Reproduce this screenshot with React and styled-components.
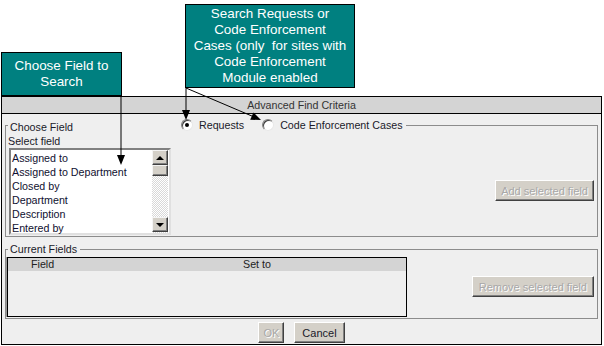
import React from "react";
import styled, { createGlobalStyle } from "styled-components";

const GlobalStyle = createGlobalStyle`
    html, body {
        margin: 0;
        padding: 0;
        background: #fff;
    }
    body {
        font-family: "Liberation Sans", Arial, sans-serif;
        font-size: 10.7px;
        color: #1a1a2a;
    }
`

const Page = styled.div`
    position: relative;
    width: 604px;
    height: 346px;
    overflow: hidden;
    background: #fff;
`

const Annotations = styled.div`
    display: flex;
    align-items: flex-start;
    height: 96px;
`

const Callout = styled.div`
    box-sizing: border-box;
    display: flex;
    align-items: center;
    justify-content: center;
    text-align: center;
    background: #008080;
    color: #fff;
    border: 1px solid #000;
    font-size: 13.4px;
    line-height: 16px;
    margin-top: ${p => p.top}px;
    margin-left: ${p => p.left}px;
    width: ${p => p.w}px;
    height: ${p => p.h}px;
`

const Arrows = styled.svg`
    position: absolute;
    left: 0;
    top: 0;
    pointer-events: none;
    z-index: 2;
`

const Dialog = styled.div`
    box-sizing: border-box;
    margin-left: 1px;
    width: 601px;
    border: 1px solid #000;
    background: #efefef;
`

const TitleBar = styled.div`
    height: 16px;
    line-height: 16px;
    background: #d4d4d4;
    border-bottom: 1px solid #000;
    text-align: center;
    color: #333;
`

const Body = styled.div`
    padding: 5px 3px 1px 3px;
`

const Fieldset = styled.fieldset`
    margin: ${p => p.mt || 0}px 0 0 0;
    padding: 0 2px ${p => p.pb || 0}px ${p => p.pl || 0}px;
    border: 1px solid #8c8c8c;
    min-width: 0;
`

const Legend = styled.legend`
    padding: 0 3px 0 ${p => p.pl || 2}px;
    line-height: 12px;
    height: 12px;
    margin-left: ${p => p.ml || 0}px;
`

const LegendRow = styled.span`
    display: inline-flex;
    align-items: center;
    height: 12px;
`

const LegendLabel = styled.span`
    width: 171px;
    margin-top: 3px;
`

const Radio = styled.span`
    box-sizing: border-box;
    display: inline-flex;
    align-items: center;
    justify-content: center;
    width: 12px;
    height: 12px;
    border-radius: 50%;
    background: #fff;
    border: 1px solid;
    border-color: #808080 #e8e8e8 #e8e8e8 #808080;
    box-shadow: inset 1px 1px 0 #404040;
    margin-right: 6px;
    margin-left: ${p => p.ml || 0}px;
    &::after {
        content: "";
        width: 4px;
        height: 4px;
        border-radius: 50%;
        background: ${p => (p.checked ? "#000" : "transparent")};
    }
`

const ChooseRow = styled.div`
    display: flex;
`

const ChooseColumn = styled.div`
    display: flex;
    flex-direction: column;
`

const Label = styled.div`
    line-height: 13px;
    margin: 4px 0 0 0;
`

const ListBox = styled.div`
    box-sizing: border-box;
    display: flex;
    width: 162px;
    height: 87px;
    background: #fff;
    border: 2px solid;
    border-color: #808080 #e0e0e0 #e0e0e0 #808080;
    margin-left: 1px;
`

const Items = styled.ul`
    flex: 1;
    list-style: none;
    margin: 0;
    padding: 1px 0 0 1px;
`

const Item = styled.li`
    line-height: 14px;
    color: #101030;
`

const ScrollBar = styled.div`
    display: flex;
    flex-direction: column;
    width: 16px;
    margin-right: 1px;
    background: repeating-conic-gradient(#d8d8d8 0 25%, #fff 0 50%) 0 0 / 2px 2px;
`

const ScrollButton = styled.div`
    box-sizing: border-box;
    display: flex;
    align-items: center;
    justify-content: center;
    height: ${p => p.h || 15}px;
    background: #d4d0c8;
    border: 1px solid;
    border-color: #f4f4f4 #404040 #404040 #f4f4f4;
    box-shadow: inset -1px -1px 0 #808080;
    margin-bottom: ${p => p.mb || 0}px;
`

const ArrowGlyph = styled.span`
    width: 0;
    height: 0;
    border-left: 4px solid transparent;
    border-right: 4px solid transparent;
    ${p => (p.down ? "border-top: 4px solid #000;" : "border-bottom: 4px solid #000;")}
`

const Track = styled.div`
    flex: 1;
`

const Button = styled.button`
    box-sizing: border-box;
    height: 21px;
    padding: 0 ${p => p.px || 6}px;
    font-family: "Liberation Sans", Arial, sans-serif;
    font-size: 11px;
    background: #d4d0c8;
    border: 1px solid;
    border-color: #fff #404040 #404040 #fff;
    box-shadow: inset -1px -1px 0 #808080;
    color: ${p => (p.disabled ? "#a8a8a8" : "#1a1a2a")};
    text-shadow: ${p => (p.disabled ? "1px 1px 0 #fff" : "none")};
    cursor: default;
`

const SideButton = styled(Button)`
    margin-left: auto;
    align-self: ${p => p.align || "center"};
    margin-bottom: ${p => p.mb || 0}px;
    margin-right: 1px;
`

const CurrentRow = styled.div`
    display: flex;
    align-items: center;
`

const FieldsTable = styled.div`
    box-sizing: border-box;
    width: 400px;
    height: 60px;
    border: 1px solid #000;
    box-shadow: -1px 0 0 #9a9a9a;
    margin: 2px 0 1px 1px;
`

const TableHead = styled.div`
    display: flex;
    height: 13px;
    line-height: 13px;
    background: #d4d4d4;
    color: #222;
`

const HeadCell = styled.span`
    width: ${p => p.w}px;
    padding-left: ${p => p.pl}px;
`

const Footer = styled.div`
    display: flex;
    justify-content: center;
    gap: 10px;
    margin-top: 3px;
`

const items = [
    "Assigned to",
    "Assigned to Department",
    "Closed by",
    "Department",
    "Description",
    "Entered by",
];

function App() {
    return (
        <Page>
            <GlobalStyle />
            <Annotations>
                <Callout top={52} left={1} w={121} h={44}>
                    Choose Field to<br />Search
                </Callout>
                <Callout top={4} left={63} w={170} h={84}>
                    Search Requests or<br />
                    Code Enforcement<br />
                    Cases (only&nbsp; for sites with<br />
                    Code Enforcement<br />
                    Module enabled
                </Callout>
            </Annotations>
            <Dialog>
                <TitleBar>Advanced Find Criteria</TitleBar>
                <Body>
                    <Fieldset pl={2} pb={1}>
                        <Legend>
                            <LegendRow>
                                <LegendLabel>Choose Field</LegendLabel>
                                <Radio checked />Requests
                                <Radio ml={18} />Code Enforcement Cases
                            </LegendRow>
                        </Legend>
                        <ChooseRow>
                            <ChooseColumn>
                                <Label>Select field</Label>
                                <ListBox>
                                    <Items>
                                        {items.map(item => <Item key={item}>{item}</Item>)}
                                    </Items>
                                    <ScrollBar>
                                        <ScrollButton><ArrowGlyph /></ScrollButton>
                                        <ScrollButton h={11} />
                                        <Track />
                                        <ScrollButton mb={1}><ArrowGlyph down /></ScrollButton>
                                    </ScrollBar>
                                </ListBox>
                            </ChooseColumn>
                            <SideButton disabled align="flex-end" mb={34} px={5}>Add selected field</SideButton>
                        </ChooseRow>
                    </Fieldset>
                    <Fieldset mt={6}>
                        <Legend ml={2}>Current Fields</Legend>
                        <CurrentRow>
                            <FieldsTable>
                                <TableHead>
                                    <HeadCell w={212} pl={23}>Field</HeadCell>
                                    <HeadCell w={150} pl={0}>Set to</HeadCell>
                                </TableHead>
                            </FieldsTable>
                            <SideButton disabled px={6}>Remove selected field</SideButton>
                        </CurrentRow>
                    </Fieldset>
                    <Footer>
                        <Button disabled px={4}>OK</Button>
                        <Button px={7}>Cancel</Button>
                    </Footer>
                </Body>
            </Dialog>
            <Arrows width="604" height="346">
                <line x1="121" y1="96" x2="121" y2="157" stroke="#000" strokeWidth="1" />
                <polygon points="117,155 125,155 121,165" fill="#000" />
                <line x1="186" y1="88" x2="186" y2="112" stroke="#000" strokeWidth="1" />
                <polygon points="182,110 190,110 186,120" fill="#000" />
                <line x1="186" y1="88" x2="253" y2="116.5" stroke="#000" strokeWidth="1" />
                <polygon points="250.2,119.8 253.4,112.4 261,120" fill="#000" />
            </Arrows>
        </Page>
    );
}

export default App;
